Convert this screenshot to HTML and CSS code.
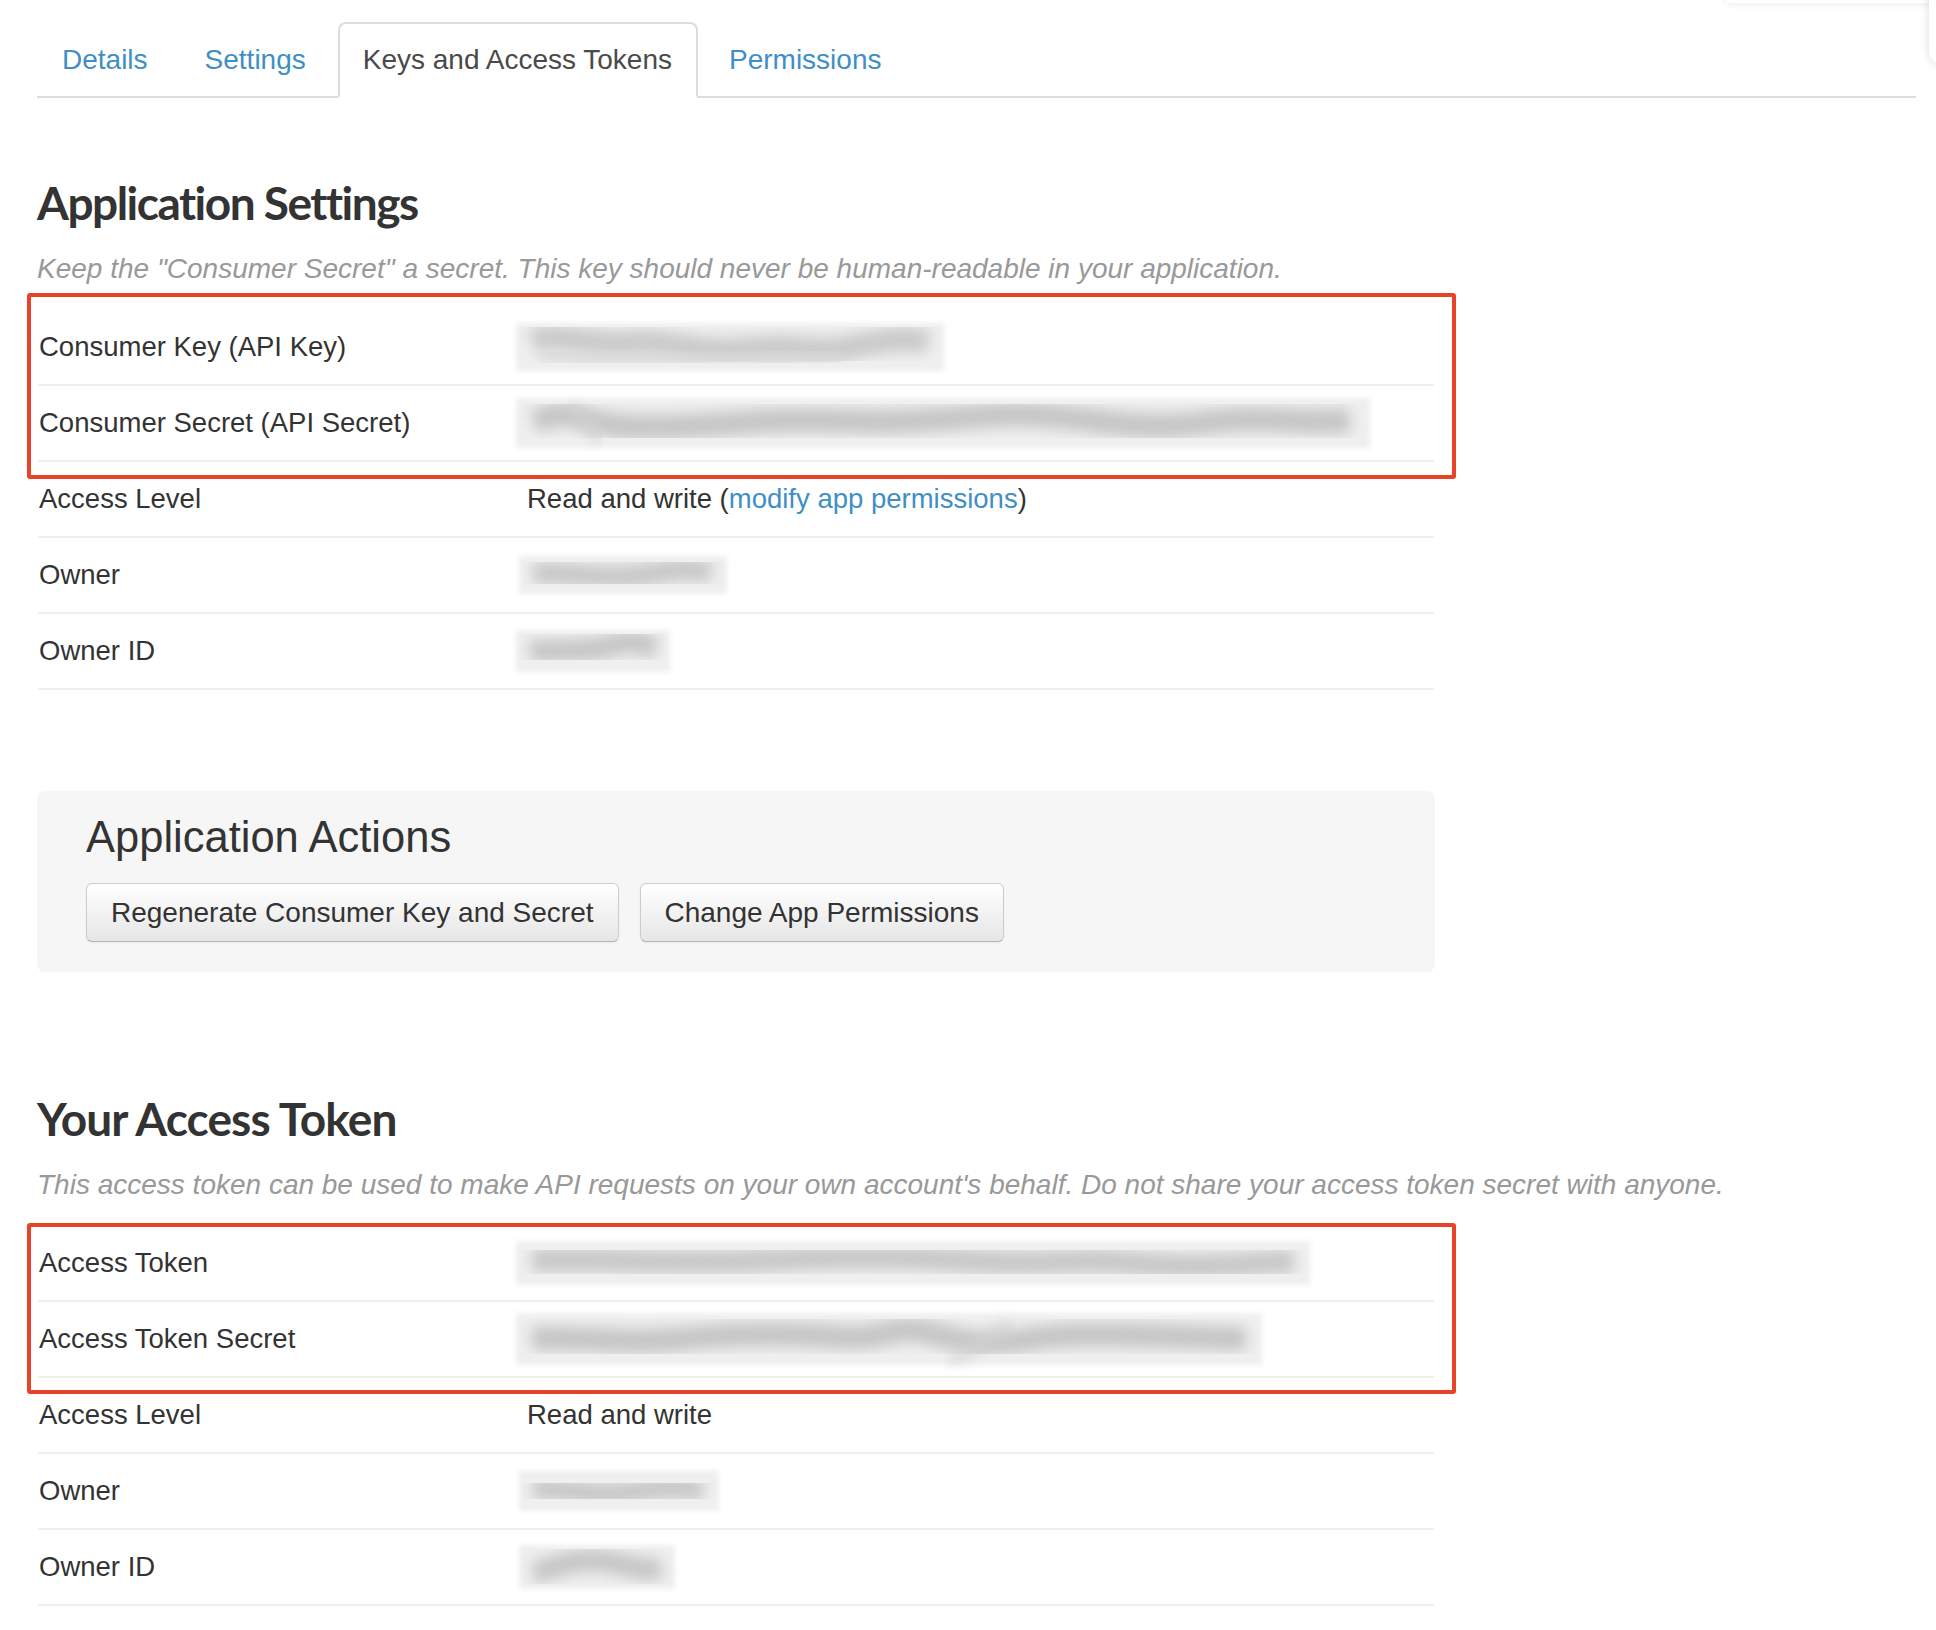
FILE: index.html
```html
<!DOCTYPE html>
<html lang="en">
<head>
<meta charset="utf-8">
<title>Keys and Access Tokens</title>
<link rel="stylesheet" href="styles.css">
</head>
<body>
<svg class="defs" aria-hidden="true">
  <defs>
    <filter id="soft" x="-10%" y="-40%" width="120%" height="180%"><feGaussianBlur stdDeviation="2.5"/></filter>
    <filter id="smear" x="-10%" y="-80%" width="120%" height="260%"><feGaussianBlur stdDeviation="7"/></filter>
  </defs>
</svg>
<div class="corner-top"></div>
<div class="corner-side"></div>
<div class="page">
  <ul class="tabs">
    <li class="tab"><a class="tab-link" href="#">Details</a></li>
    <li class="tab"><a class="tab-link" href="#">Settings</a></li>
    <li class="tab"><a class="tab-link tab-active" href="#">Keys and Access Tokens</a></li>
    <li class="tab"><a class="tab-link" href="#">Permissions</a></li>
  </ul>

  <section class="sec">
    <h2 class="sec-title sec-title-first">Application Settings</h2>
    <p class="sec-note">Keep the "Consumer Secret" a secret. This key should never be human-readable in your application.</p>
    <div class="kv">
      <div class="hl hl-app"></div>
      <div class="kv-row">
        <div class="kv-key">Consumer Key (API Key)</div>
        <div class="kv-val">
          <svg class="smudge" width="440" height="60" viewBox="0 0 440 60"><rect x="6" y="6" width="428" height="48" fill="#efefef" filter="url(#soft)"/><path d="M22 24 C 50 14, 80 30, 120 26 S 190 38, 240 32 S 300 38, 340 30 S 400 20, 418 26" stroke="#cacaca" stroke-width="24" fill="none" filter="url(#smear)"/><path d="M30 38 C 120 42, 220 44, 330 40" stroke="#d8d8d8" stroke-width="12" fill="none" filter="url(#smear)"/></svg>
        </div>
      </div>
      <div class="kv-row">
        <div class="kv-key">Consumer Secret (API Secret)</div>
        <div class="kv-val">
          <svg class="smudge" width="866" height="62" viewBox="0 0 866 62"><rect x="6" y="6" width="854" height="50" fill="#efefef" filter="url(#soft)"/><path d="M24 30 C 40 24, 50 18, 80 28 S 160 36, 240 30 S 340 34, 420 28 S 500 20, 560 26 S 640 38, 700 30 S 790 34, 840 28" stroke="#c6c6c6" stroke-width="24" fill="none" filter="url(#smear)"/><path d="M60 14 C 70 24, 80 36, 90 48" stroke="#d2d2d2" stroke-width="9" fill="none" filter="url(#smear)"/></svg>
        </div>
      </div>
      <div class="kv-row">
        <div class="kv-key">Access Level</div>
        <div class="kv-val kv-text">Read and write (<a class="link" href="#">modify app permissions</a>)</div>
      </div>
      <div class="kv-row">
        <div class="kv-key">Owner</div>
        <div class="kv-val">
          <svg class="smudge smudge-sm" width="220" height="50" viewBox="0 0 220 50"><rect x="6" y="6" width="208" height="38" fill="#efefef" filter="url(#soft)"/><path d="M20 24 C 50 20, 80 30, 120 26 S 170 14, 198 24" stroke="#c8c8c8" stroke-width="22" fill="none" filter="url(#smear)"/></svg>
        </div>
      </div>
      <div class="kv-row">
        <div class="kv-key">Owner ID</div>
        <div class="kv-val">
          <svg class="smudge" width="166" height="54" viewBox="0 0 166 54"><rect x="6" y="6" width="154" height="42" fill="#efefef" filter="url(#soft)"/><path d="M20 28 C 40 24, 70 30, 100 22 S 130 20, 146 24" stroke="#c6c6c6" stroke-width="22" fill="none" filter="url(#smear)"/></svg>
        </div>
      </div>
    </div>
  </section>

  <section class="actions">
    <h3 class="actions-title">Application Actions</h3>
    <div class="actions-buttons">
      <button class="btn" type="button">Regenerate Consumer Key and Secret</button>
      <button class="btn" type="button">Change App Permissions</button>
    </div>
  </section>

  <section class="sec">
    <h2 class="sec-title sec-title-token">Your Access Token</h2>
    <p class="sec-note">This access token can be used to make API requests on your own account's behalf. Do not share your access token secret with anyone.</p>
    <div class="kv">
      <div class="hl hl-token"></div>
      <div class="kv-row">
        <div class="kv-key">Access Token</div>
        <div class="kv-val">
          <svg class="smudge" width="806" height="56" viewBox="0 0 806 56"><rect x="6" y="6" width="794" height="44" fill="#efefef" filter="url(#soft)"/><path d="M22 26 C 80 22, 160 30, 240 26 S 380 20, 460 26 S 560 22, 620 28 S 720 30, 784 26" stroke="#c8c8c8" stroke-width="23" fill="none" filter="url(#smear)"/></svg>
        </div>
      </div>
      <div class="kv-row">
        <div class="kv-key">Access Token Secret</div>
        <div class="kv-val">
          <svg class="smudge" width="758" height="64" viewBox="0 0 758 64"><rect x="6" y="6" width="746" height="52" fill="#efefef" filter="url(#soft)"/><path d="M22 32 C 60 28, 110 38, 170 32 S 280 26, 330 30 S 380 16, 420 26 S 470 40, 520 32 S 620 28, 736 32" stroke="#c6c6c6" stroke-width="24" fill="none" filter="url(#smear)"/><path d="M440 54 C 460 44, 480 32, 500 18" stroke="#d2d2d2" stroke-width="9" fill="none" filter="url(#smear)"/></svg>
        </div>
      </div>
      <div class="kv-row">
        <div class="kv-key">Access Level</div>
        <div class="kv-val kv-text">Read and write</div>
      </div>
      <div class="kv-row">
        <div class="kv-key">Owner</div>
        <div class="kv-val">
          <svg class="smudge smudge-sm" width="212" height="52" viewBox="0 0 212 52"><rect x="6" y="6" width="200" height="40" fill="#efefef" filter="url(#soft)"/><path d="M20 24 C 50 22, 80 32, 110 28 S 160 20, 190 26" stroke="#c8c8c8" stroke-width="22" fill="none" filter="url(#smear)"/></svg>
        </div>
      </div>
      <div class="kv-row">
        <div class="kv-key">Owner ID</div>
        <div class="kv-val">
          <svg class="smudge smudge-sm" width="168" height="56" viewBox="0 0 168 56"><rect x="6" y="6" width="156" height="44" fill="#efefef" filter="url(#soft)"/><path d="M20 34 C 40 30, 60 18, 90 22 S 130 34, 148 28" stroke="#c6c6c6" stroke-width="22" fill="none" filter="url(#smear)"/></svg>
        </div>
      </div>
    </div>
  </section>
</div>
</body>
</html>
```

FILE: styles.css
```css
html, body {
  margin: 0;
  padding: 0;
  background: #ffffff;
  overflow: hidden;
}

body {
  font-family: "Liberation Sans", Arial, Helvetica, sans-serif;
  font-size: 27.5px;
  line-height: 38px;
  color: #333333;
  position: relative;
  min-height: 1630px;
}

.defs {
  position: absolute;
  width: 0;
  height: 0;
  overflow: hidden;
}

.corner-top {
  position: absolute;
  top: -40px;
  left: 1726px;
  width: 260px;
  height: 43px;
  background: #ffffff;
  box-shadow: 0 0 8px rgba(0, 0, 0, 0.10);
}

.corner-side {
  position: absolute;
  top: -40px;
  left: 1929px;
  width: 60px;
  height: 105px;
  border-radius: 14px;
  background: #ffffff;
  box-shadow: 0 0 10px rgba(0, 0, 0, 0.14);
}

.page {
  padding: 0 20px 0 37px;
}

/* Tabs */
.tabs {
  display: flex;
  list-style: none;
  margin: 0;
  padding: 22px 0 0;
  border-bottom: 2px solid #dddddd;
}

.tab {
  margin: 0 6px -2px 0;
}

.tab-link {
  display: block;
  padding: 17px 24px 17px 23px;
  border: 2px solid transparent;
  border-radius: 8px 8px 0 0;
  font-size: 28px;
  line-height: 38px;
  color: #3f8fc5;
  text-decoration: none;
}

.tab-active {
  color: #4a4a4a;
  background: #ffffff;
  border-color: #dddddd #dddddd transparent;
}

/* Sections */
.sec-title {
  font-family: Lato, "Liberation Sans", sans-serif;
  font-weight: 700;
  font-size: 46px;
  line-height: 50px;
  color: #333333;
  margin: 0;
  letter-spacing: -1.2px;
}

.sec-title-first {
  margin-top: 80px;
  letter-spacing: -1.5px;
}

.sec-title-token {
  margin-top: 122px;
  letter-spacing: -0.9px;
}

.sec-note {
  margin: 22px 0 0;
  font-style: italic;
  color: #999999;
  font-size: 28px;
  line-height: 38px;
}

.kv {
  position: relative;
  margin: 22px 0 0 1px;
  width: 1396px;
}

.kv-row {
  display: flex;
  align-items: center;
  height: 74px;
  border-bottom: 2px solid #eeeeee;
}

.kv-key {
  flex: 0 0 488px;
  padding-left: 1px;
}

.kv-val {
  flex: 1;
  display: flex;
  align-items: center;
}

.smudge {
  display: block;
  margin-left: -17px;
}

.smudge-sm {
  margin-left: -14px;
}

.link {
  color: #3f8fc5;
  text-decoration: none;
}

/* Highlight annotation boxes */
.hl {
  position: absolute;
  left: -11px;
  width: 1429px;
  border: 4px solid #e74427;
  border-radius: 3px;
  box-sizing: border-box;
  pointer-events: none;
  z-index: 2;
}

.hl-app {
  top: -17px;
  height: 186px;
}

.hl-token {
  top: -3px;
  height: 171px;
}

/* Actions */
.actions {
  margin-top: 101px;
  width: 1398px;
  box-sizing: border-box;
  background: #f6f6f6;
  border-radius: 8px;
  padding: 23px 49px 30px;
}

.actions-title {
  margin: 0 0 23px;
  font-weight: 400;
  font-size: 43.5px;
  line-height: 46px;
  color: #333333;
}

.actions-buttons {
  display: flex;
  gap: 21px;
}

.btn {
  font-family: "Liberation Sans", Arial, Helvetica, sans-serif;
  font-size: 28px;
  line-height: 39px;
  color: #333333;
  padding: 9px 24px;
  border: 1px solid #cccccc;
  border-bottom-color: #b3b3b3;
  border-radius: 6px;
  background: linear-gradient(#ffffff, #e6e6e6);
  box-shadow: inset 0 1px 0 rgba(255, 255, 255, 0.2), 0 1px 2px rgba(0, 0, 0, 0.05);
  cursor: pointer;
}
```
